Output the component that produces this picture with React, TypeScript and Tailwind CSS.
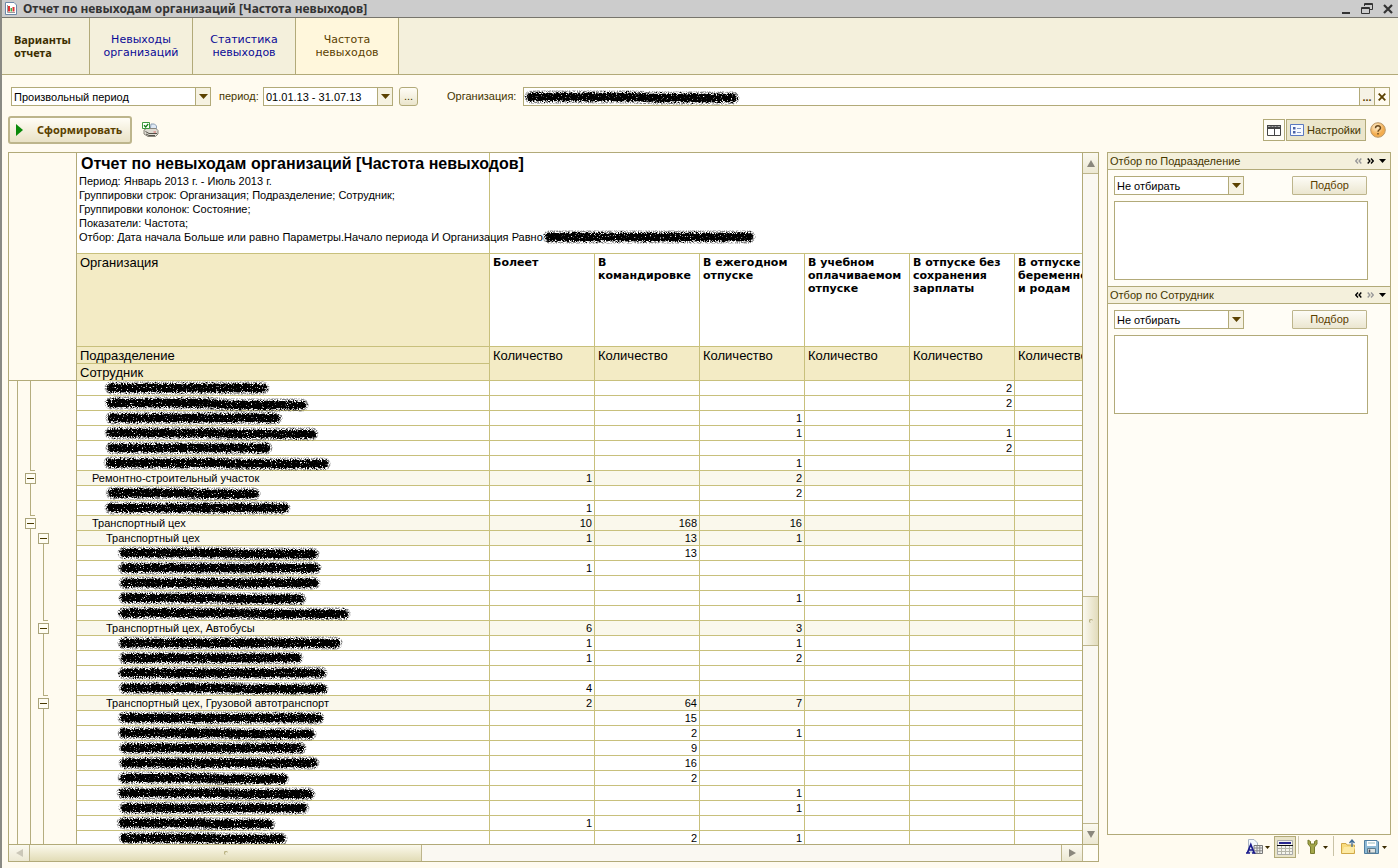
import React from "react";

type Lane = "line" | "end" | "box" | "none";
type Row = { text?: string; ink?: number; indent: number; v: string[]; lanes: [Lane, Lane]; bend?: number };

const ink = (indent: number, width: number, v: string[], lanes: [Lane, Lane], bend = 0): Row => ({ ink: width, indent, v, lanes, bend });
const grp = (text: string, indent: number, v: string[], lanes: [Lane, Lane]): Row => ({ text, indent, v, lanes });

const rows: Row[] = [
  ink(28, 164, ["", "", "", "", "2", ""], ["line", "none"]),
  ink(28, 203, ["", "", "", "", "2", ""], ["line", "none"], 2),
  ink(29, 176, ["", "", "1", "", "", ""], ["line", "none"]),
  ink(28, 213, ["", "", "1", "", "1", ""], ["line", "none"], 1),
  ink(29, 166, ["", "", "", "", "2", ""], ["line", "none"]),
  ink(27, 226, ["", "", "1", "", "", ""], ["end", "none"], 1),
  grp("Ремонтно-строительный участок", 15, ["1", "", "2", "", "", ""], ["box", "none"]),
  ink(29, 154, ["", "", "2", "", "", ""], ["line", "none"], 1),
  ink(28, 185, ["1", "", "", "", "", ""], ["end", "none"]),
  grp("Транспортный цех", 15, ["10", "168", "16", "", "", ""], ["box", "none"]),
  grp("Транспортный цех", 29, ["1", "13", "1", "", "", ""], ["line", "box"]),
  ink(41, 201, ["", "13", "", "", "", ""], ["line", "line"], 1),
  ink(41, 203, ["1", "", "", "", "", ""], ["line", "line"]),
  ink(42, 201, ["", "", "", "", "", ""], ["line", "line"]),
  ink(42, 187, ["", "", "1", "", "", ""], ["line", "line"], 1),
  ink(41, 232, ["", "", "", "", "", ""], ["line", "end"], 1),
  grp("Транспортный цех, Автобусы", 29, ["6", "", "3", "", "", ""], ["line", "box"]),
  ink(41, 224, ["1", "", "1", "", "", ""], ["line", "line"]),
  ink(42, 184, ["1", "", "2", "", "", ""], ["line", "line"]),
  ink(41, 209, ["", "", "", "", "", ""], ["line", "line"]),
  ink(42, 209, ["4", "", "", "", "", ""], ["line", "end"], 1),
  grp("Транспортный цех, Грузовой автотранспорт", 29, ["2", "64", "7", "", "", ""], ["line", "box"]),
  ink(41, 206, ["", "15", "", "", "", ""], ["line", "line"]),
  ink(41, 198, ["", "2", "1", "", "", ""], ["line", "line"], 1),
  ink(42, 187, ["", "9", "", "", "", ""], ["line", "line"]),
  ink(42, 200, ["", "16", "", "", "", ""], ["line", "line"]),
  ink(41, 171, ["", "2", "", "", "", ""], ["line", "line"], 1),
  ink(40, 198, ["", "", "1", "", "", ""], ["line", "line"], 1),
  ink(42, 190, ["", "", "1", "", "", ""], ["line", "line"]),
  ink(40, 158, ["1", "", "", "", "", ""], ["line", "line"], 1),
  ink(42, 168, ["", "2", "1", "", "", ""], ["line", "line"], 1),
];

const columns = [
  "Болеет",
  "В командировке",
  "В ежегодном отпуске",
  "В учебном оплачиваемом отпуске",
  "В отпуске без сохранения зарплаты",
  "В отпуске по беременности и родам",
];

function Scribble({ width, bend = 0, seed = 1 }: { width: number; bend?: number; seed?: number }) {
  const line = `M6 7H${width * 0.5}L${width * 0.62} ${7 + bend}H${width - 6}`;
  const area = { x: -10, y: -6, width: width + 20, height: 28, filterUnits: "userSpaceOnUse" as const };
  return (
    <svg width={width} height="14" viewBox={`0 0 ${width} 14`} className="block shrink-0 overflow-visible" aria-hidden="true">
      <defs>
        <filter id={`core-${seed}`} {...area}>
          <feTurbulence type="fractalNoise" baseFrequency="0.8" numOctaves="2" seed={seed} result="n" />
          <feDisplacementMap in="SourceGraphic" in2="n" scale="6" xChannelSelector="R" yChannelSelector="G" result="d" />
          <feColorMatrix in="n" type="matrix" values="0 0 0 0 0  0 0 0 0 0  0 0 0 0 0  0 0 9 0 -2.2" result="m" />
          <feComposite in="d" in2="m" operator="in" />
        </filter>
        <filter id={`halo-${seed}`} {...area}>
          <feTurbulence type="fractalNoise" baseFrequency="0.9" numOctaves="2" seed={seed + 200} result="n" />
          <feColorMatrix in="n" type="matrix" values="0 0 0 0 0  0 0 0 0 0  0 0 0 0 0  5 0 0 0 -2" result="m" />
          <feComposite in="SourceGraphic" in2="m" operator="in" />
        </filter>
      </defs>
      <g fill="none" stroke="#000" strokeLinecap="round">
        <path d={line} strokeWidth="13" strokeOpacity="0.5" filter={`url(#halo-${seed})`} />
        <path d={line} strokeWidth="8" filter={`url(#core-${seed})`} />
      </g>
    </svg>
  );
}

function LaneMark({ kind }: { kind: Lane }) {
  if (kind === "box")
    return (
      <span className="flex h-[15px] w-[13px] flex-col items-center pt-[2px]">
        <button aria-label="Свернуть группу" className="flex h-[11px] w-[11px] shrink-0 items-center justify-center border border-[#aaa37a] bg-[#fffdf3]">
          <span className="h-px w-[7px] bg-[#4a3a00]" />
        </button>
        <span className="w-px flex-1 bg-[#b5ad7f]" />
      </span>
    );
  return (
    <span className="flex h-[15px] w-[13px] pl-[6px]">
      {kind === "line" && <span className="w-px bg-[#b5ad7f]" />}
      {kind === "end" && <span className="w-[5px] border-b border-l border-[#b5ad7f]" />}
    </span>
  );
}

function Down({ color = "#5b4100" }: { color?: string }) {
  return (
    <svg width="9" height="5" viewBox="0 0 9 5" aria-hidden="true">
      <path d="M0 0H9L4.500 5Z" fill={color} />
    </svg>
  );
}

function Combo({ id, label, value, width }: { id: string; label: string; value: string; width: string }) {
  return (
    <div className={`relative flex h-[19px] border border-[#b2aa79] bg-white ${width}`}>
      <select id={id} aria-label={label} className="h-full w-full appearance-none bg-transparent pt-px pr-4 pl-[2px] text-[11px] leading-[16px] text-black outline-none">
        <option>{value}</option>
      </select>
      <span className="pointer-events-none absolute inset-y-0 right-0 flex w-[15px] items-center justify-center border-l border-[#b2aa79] bg-[#f6f2e2]">
        <Down />
      </span>
    </div>
  );
}

function FilterPanel({ title, id, prev, next }: { title: string; id: string; prev: string; next: string }) {
  return (
    <section className="h-[133px]">
      <header className="flex h-[17px] items-center border-b border-[#b2aa79] bg-[#f4f0dc] pr-[4px] pl-[2px]">
        <h2 className="flex-1 pt-px text-[11px] leading-[15px] text-[#453600]">{title}</h2>
        <div className="flex items-center gap-[5px]">
          <button aria-label="Предыдущий" className={prev}>
            <svg width="7" height="6" viewBox="0 0 7 6" fill="none" stroke="currentColor" strokeWidth="1.400"><path d="M3 .5 .8 3 3 5.500M6.300 .5 4.100 3l2.200 2.500" /></svg>
          </button>
          <button aria-label="Следующий" className={next}>
            <svg width="7" height="6" viewBox="0 0 7 6" fill="none" stroke="currentColor" strokeWidth="1.400"><path d="M.7 .5 2.900 3 .7 5.500M4 .5 6.200 3 4 5.500" /></svg>
          </button>
          <button aria-label="Меню">
            <svg width="7" height="4" viewBox="0 0 7 4"><path d="M0 0H7L3.500 4Z" fill="#000" /></svg>
          </button>
        </div>
      </header>
      <div className="px-[6px] pt-[6px]">
        <div className="flex justify-between pr-[17px]">
          <Combo id={id} label={title} value="Не отбирать" width="w-[130px]" />
          <button className="h-[19px] w-[75px] rounded-[1px] border border-[#bdb58c] bg-linear-to-b from-[#fdfcf6] to-[#ebe6d0] text-[11px] leading-[17px] text-[#5b4100]">Подбор</button>
        </div>
        <div className="mt-[6px] mr-4 h-[79px] border border-[#b2aa79] bg-white" />
      </div>
    </section>
  );
}

const scrollBtn = "flex shrink-0 items-center justify-center border-[#bdb58c] bg-linear-to-b from-[#fbf9f0] to-[#ece8d3]";

export default function App() {
  return (
    <div className="flex h-screen min-h-[500px] flex-col overflow-hidden border-l-2 border-[#8a8a84] bg-[#fffbf0] font-['Liberation_Sans',Arial,sans-serif] text-[11px] text-black">
      <header className="flex h-[18px] shrink-0 items-center border-b border-[#77756c] bg-[#cccccc] pr-[5px] pl-[3px]">
        <svg width="12" height="13" viewBox="0 0 12 13" aria-hidden="true">
          <path d="M.5 .5H9L11.500 3V12.500H.5Z" fill="#fff" stroke="#6d87a8" />
          <path d="M2.500 3V10.500H10" fill="none" stroke="#999" />
          <path d="M3 4H5V9.500H3Z" fill="#d33" />
          <path d="M5.500 6H7V9.500H5.500Z" fill="#4a4" />
          <path d="M7.500 5H9.500V9.500H7.500Z" fill="#d33" />
        </svg>
        <h1 className="ml-[6px] flex-1 font-['Noto_Sans',Tahoma,sans-serif] text-[12px] leading-[16px] font-bold whitespace-nowrap text-[#333]">Отчет по невыходам организаций [Частота невыходов]</h1>
        <div className="flex items-center gap-[10px] text-[#333]">
          <button aria-label="Свернуть"><svg width="9" height="11" viewBox="0 0 9 11"><path d="M0 9H8V11H0Z" fill="currentColor" /></svg></button>
          <button aria-label="Восстановить"><svg width="12" height="11" viewBox="0 0 12 11" fill="none" stroke="currentColor"><path d="M3.500 3V.5H11.500V6.500H8.500M3 1.500H11M.5 4.500H8.500V10.500H.5ZM1 5.500H8" /></svg></button>
          <button aria-label="Закрыть"><svg width="10" height="10" viewBox="0 0 10 10" fill="none" stroke="currentColor" strokeWidth="2.200"><path d="M1 1 9 9M9 1 1 9" /></svg></button>
        </div>
      </header>

      <nav className="flex h-[57px] shrink-0 border-b border-[#b2aa79] bg-[#f4f0dc] font-['DejaVu_Sans',Verdana,sans-serif] text-[11px] leading-[13px]">
        <div className="flex w-[88px] items-center border-r border-[#b2aa79] pl-3 font-['Noto_Sans',Tahoma,sans-serif] font-bold text-[#3d2e00]">Варианты<br />отчета</div>
        <a href="#absences" className="flex w-[103px] items-center justify-center border-r border-[#b2aa79] text-center text-[#0a0a96]">Невыходы<br />организаций</a>
        <a href="#statistics" className="flex w-[103px] items-center justify-center border-r border-[#b2aa79] text-center text-[#0a0a96]">Статистика<br />невыходов</a>
        <a href="#frequency" aria-current="page" className="flex w-[103px] items-center justify-center border-r border-[#b2aa79] bg-[#fff7dc] text-center text-[#5b4100]">Частота<br />невыходов</a>
      </nav>

      <div className="flex shrink-0 items-center pt-3 pr-2 pl-[9px] text-[#453600]">
        <Combo id="period-kind" label="Вид периода" value="Произвольный период" width="w-[200px]" />
        <label htmlFor="period" className="ml-2 w-[44px]">период:</label>
        <Combo id="period" label="Период" value="01.01.13 - 31.07.13" width="w-[130px]" />
        <button aria-label="Выбрать период" className="ml-[6px] h-[19px] w-[19px] rounded-[3px] border border-[#b2aa79] bg-linear-to-b from-[#fffdf6] to-[#ebe5cc] leading-[15px]">...</button>
        <label htmlFor="org" className="ml-[29px] w-[76px]">Организация:</label>
        <div className="relative flex h-[19px] flex-1 border border-[#b2aa79] bg-white">
          <input id="org" className="min-w-0 flex-1 bg-transparent outline-none" />
          <span className="pointer-events-none absolute top-[2px] left-px"><Scribble width={214} bend={1} seed={90} /></span>
          <button aria-label="Выбрать организацию" className="w-[15px] border-l border-[#b2aa79] bg-[#f6f2e6] leading-[16px] font-bold text-[#5b4100]">...</button>
          <button aria-label="Очистить" className="flex w-[15px] items-center justify-center border-l border-[#b2aa79] bg-[#fffbf0]">
            <svg width="8" height="8" viewBox="0 0 8 8" fill="none" stroke="#5b4100" strokeWidth="1.800"><path d="M.7 .7 7.300 7.300M7.300 .7 .7 7.300" /></svg>
          </button>
        </div>
      </div>

      <div className="flex shrink-0 items-center pt-[10px] pr-3 pb-2 pl-[6px]">
        <button className="flex h-[28px] w-[124px] items-center rounded-[3px] border-2 border-[#bdb58c] bg-linear-to-b from-[#fffdf6] to-[#e9e2c6] pl-[6px] font-['Noto_Sans',Tahoma,sans-serif] text-[11px] font-bold text-[#5b4100]">
          <svg width="7" height="12" viewBox="0 0 7 12" className="mr-[14px]"><path d="M0 0 7 6 0 12Z" fill="#0a8a0a" /></svg>
          Сформировать
        </button>
        <button aria-label="Печать" className="ml-[10px]">
          <svg width="17" height="16" viewBox="0 0 17 16">
            <path d="M9 2H12.500L14.500 4V9H8Z" fill="#dfe9f5" stroke="#8d9fb5" />
            <path d="M2 8 4.500 6.500H14L16 8.500V12L13.500 14.500H6L2 12Z" fill="#dedbd2" stroke="#8a867c" />
            <path d="M3.500 9.500 7 11.500H15M4 12 7 13.500H13" fill="none" stroke="#55524a" />
            <path d="M11.500 10H14" stroke="#d66" />
            <path d="M.5 .5H7.500V6.500H.5Z" fill="#fff" stroke="#3f9a3f" />
            <path d="M2 3.200 3.700 5 6.200 2" fill="none" stroke="#168016" strokeWidth="1.300" />
          </svg>
        </button>
        <div className="flex-1" />
        <button aria-label="Таблица" className="flex h-[22px] w-[22px] items-center justify-center border border-[#b2aa79] bg-[#fffdf6]">
          <svg width="14" height="11" viewBox="0 0 14 11" fill="none" stroke="#444"><path d="M.5 .5H13.500V10.500H.5ZM7.500 4V10" fill="#fff" /><path d="M0 2H14" strokeWidth="4" stroke="#444" /><path d="M1 1.500H3.500M4.500 1.500H6.500M7.500 1.500H9.500M10.500 1.500H13" stroke="#aaa" /></svg>
        </button>
        <button className="ml-px flex h-[22px] w-[80px] items-center gap-[3px] border border-[#b2aa79] bg-[#ebe6cc] pl-[3px] text-[11px] whitespace-nowrap text-[#453600]">
          <svg width="14" height="12" viewBox="0 0 14 12" className="shrink-0"><path d="M.5 .5H13.500V11.500H.5Z" fill="#f6f9ff" stroke="#5a78c0" /><path d="M3 3H5.500V5.500H3ZM3 7H5.500V9.500H3Z" fill="#4a62a8" /><path d="M7 4.500H11M7 8.500H11" stroke="#8296c8" /></svg>
          Настройки
        </button>
        <button aria-label="Справка" className="ml-1">
          <svg width="16" height="16" viewBox="0 0 16 16"><defs><radialGradient id="help" cx=".4" cy=".3"><stop offset="0" stopColor="#fff3d6" /><stop offset="1" stopColor="#f3ac4e" /></radialGradient></defs><circle cx="8" cy="8" r="7.300" fill="url(#help)" stroke="#b9986a" /><path d="M5.500 6.200C5.500 3 10.500 3 10.500 6 10.500 7.800 8 7.700 8 9.700M8 11V12.500" fill="none" stroke="#6b4a1e" strokeWidth="1.500" /></svg>
        </button>
      </div>

      <main className="flex min-h-0 flex-1 gap-2 pr-[7px] pl-[6px]">
        <div className="mb-[6px] flex min-w-0 flex-1 flex-col border border-[#b2aa79]">
          <div className="flex min-h-0 flex-1">
            <div className="min-w-0 flex-1 overflow-hidden bg-white">
              <table className="w-[1111px] table-fixed border-separate border-spacing-0">
                <colgroup>
                  <col className="w-[68px]" />
                  <col className="w-[413px]" />
                  {columns.map((c) => <col key={c} className="w-[105px]" />)}
                </colgroup>
                <thead>
                  <tr className="h-[101px]">
                    <td className="border-r border-[#b2aa79] bg-[#fffbf0]" />
                    <td className="overflow-visible border-r border-b border-[#c8c07c] p-0 pl-[2px] align-top leading-[14px] whitespace-nowrap">
                      <div className="w-0">
                        <h2 className="pl-[2px] text-[16px] leading-[21px] font-bold">Отчет по невыходам организаций [Частота невыходов]</h2>
                        <p>Период: Январь 2013 г. - Июль 2013 г.</p>
                        <p>Группировки строк: Организация; Подразделение; Сотрудник;</p>
                        <p>Группировки колонок: Состояние;</p>
                        <p>Показатели: Частота;</p>
                        <div className="flex h-[14px]">
                          <span>Отбор: Дата начала Больше или равно Параметры.Начало периода И Организация Равно</span>
                          <Scribble width={212} seed={91} />
                        </div>
                      </div>
                    </td>
                    <td colSpan={6} className="border-b border-[#c8c07c]" />
                  </tr>
                  <tr className="h-[93px]">
                    <td className="border-r border-[#b2aa79] bg-[#fffbf0]" />
                    <th className="border-r border-b border-[#c8c07c] bg-[#f3ebc5] p-0 pt-px pl-[3px] text-left align-top text-[13px] leading-[15px] font-normal">Организация</th>
                    {columns.map((c) => (
                      <th key={c} className="overflow-visible border-r border-b border-[#c8c07c] p-0 pt-[2px] pl-[3px] text-left align-top font-['DejaVu_Sans',Verdana,sans-serif] text-[11px] leading-[13px] font-bold">{c}</th>
                    ))}
                  </tr>
                  <tr className="h-[17px]">
                    <td className="border-r border-[#b2aa79] bg-[#fffbf0]" />
                    <th className="border-r border-b border-[#c8c07c] bg-[#f3ebc5] p-0 pl-[3px] text-left text-[13px] leading-[15px] font-normal">Подразделение</th>
                    {columns.map((c) => (
                      <th key={c} rowSpan={2} className="border-r border-b border-[#c8c07c] bg-[#f3ebc5] p-0 pt-px pl-[3px] text-left align-top text-[13px] leading-[16px] font-normal">Количество</th>
                    ))}
                  </tr>
                  <tr className="h-[17px]">
                    <td className="border-r border-b border-[#b2aa79] bg-[#fffbf0]" />
                    <th className="border-r border-b border-[#c8c07c] bg-[#f3ebc5] p-0 pl-[3px] text-left text-[13px] leading-[15px] font-normal">Сотрудник</th>
                  </tr>
                </thead>
                <tbody>
                  {rows.map((r, i) => (
                    <tr key={i} className={r.text ? "h-[15px] bg-[#faf8ec]" : "h-[15px]"}>
                      <td className="border-r border-[#b2aa79] bg-[#fffbf0] p-0 pl-[2px]">
                        <div className="flex h-[15px]">
                          <LaneMark kind="line" />
                          <LaneMark kind={r.lanes[0]} />
                          <LaneMark kind={r.lanes[1]} />
                        </div>
                      </td>
                      <td className="border-r border-b border-[#c8c07c] p-0">
                        <div className="flex h-[14px] leading-[14px] whitespace-nowrap" style={{ paddingLeft: r.indent }}>
                          {r.text ?? <Scribble width={r.ink ?? 0} bend={r.bend} seed={i + 1} />}
                        </div>
                      </td>
                      {r.v.map((v, j) => (
                        <td key={j} className="border-r border-b border-[#c8c07c] p-0 pr-[2px] text-right text-[11px] leading-[14px]">{v}</td>
                      ))}
                    </tr>
                  ))}
                </tbody>
              </table>
            </div>
            <div className="flex w-[16px] shrink-0 flex-col border-l border-[#b2aa79] bg-[#faf8f2]">
              <button aria-label="Вверх" className={`${scrollBtn} h-[21px] border-b`}><svg width="8" height="7" viewBox="0 0 8 7"><path d="M4 0 8 7H0Z" fill="#8a877c" /></svg></button>
              <div className="flex-[423]" />
              <div className="flex h-[50px] items-center justify-center border-y border-[#bdb58c] bg-linear-to-r from-[#fbf9f0] to-[#e2dcbc]"><span className="h-1 w-1 rounded-full border-t border-l border-[#b2aa79]" /></div>
              <div className="flex-[177]" />
              <button aria-label="Вниз" className={`${scrollBtn} h-[21px] border-t`}><svg width="8" height="7" viewBox="0 0 8 7"><path d="M4 7 8 0H0Z" fill="#8a877c" /></svg></button>
            </div>
          </div>
          <div className="flex h-[17px] shrink-0 border-t border-[#b2aa79] bg-[#faf8f2]">
            <button aria-label="Влево" className={`${scrollBtn} w-[21px] border-r`}><svg width="7" height="8" viewBox="0 0 7 8"><path d="M0 4 7 0V8Z" fill="#cbc7b8" /></svg></button>
            <div className="flex flex-[392] items-center justify-center border-r border-[#bdb58c] bg-linear-to-b from-[#fbf9ec] to-[#e2dcb6]"><span className="h-1 w-1 rounded-full border-t border-l border-[#b2aa79]" /></div>
            <div className="flex-[640]" />
            <button aria-label="Вправо" className={`${scrollBtn} w-[22px] border-x`}><svg width="7" height="8" viewBox="0 0 7 8"><path d="M7 4 0 0V8Z" fill="#8a877c" /></svg></button>
            <div className="w-[15px] bg-[#fffdf6]" />
          </div>
        </div>

        <aside className="flex w-[284px] shrink-0 flex-col">
          <div className="min-h-0 flex-1 border border-[#b2aa79] bg-[#fffdf6]">
            <FilterPanel id="dept" title="Отбор по Подразделение" prev="text-[#999]" next="text-black" />
            <div className="border-t border-[#b2aa79]">
              <FilterPanel id="staff" title="Отбор по Сотрудник" prev="text-black" next="text-[#999]" />
            </div>
          </div>
          <div className="flex h-[33px] shrink-0 items-start justify-end pt-px pr-1">
            <button aria-label="Шрифт" className="mt-[3px] flex items-center gap-[2px]">
              <svg width="17" height="16" viewBox="0 0 17 16">
                <path d="M2.500 .5H8L11.500 4V13H2.500Z" fill="#f4f8fd" stroke="#a9b4c4" />
                <path d="M8 6.500H16.500V14.500H8Z" fill="#eee" stroke="#777" /><path d="M8 9H16M8 11.800H16M11 6.500V14.500M13.800 6.500V14.500" stroke="#888" />
                <path d="M0 14H4M6 14H9.500M1.500 13.500 4.800 5.500 8 13.500M3 11H6.500" fill="none" stroke="#1a1a8c" strokeWidth="1.700" />
              </svg>
              <svg width="5" height="3" viewBox="0 0 5 3"><path d="M0 0H5L2.500 3Z" fill="#3a2a00" /></svg>
            </button>
            <button aria-label="Шапка таблицы" className="ml-1 flex h-[22px] w-[22px] items-center justify-center border border-[#b2aa79] bg-[#e8e3c8]">
              <svg width="16" height="15" viewBox="0 0 16 15"><path d="M.5 .5H15.500V14.500H.5Z" fill="#f4f4ee" stroke="#aaa" /><path d="M2 3H14" stroke="#26268f" strokeWidth="2" /><path d="M0 5.500H16" stroke="#111" /><path d="M1 8.500H15M1 11.500H15M4.500 6V14M8.500 6V14M12.500 6V14" stroke="#b5b5a8" /></svg>
            </button>
            <span className="ml-[2px] h-[18px] w-px bg-[#d0cab0]" />
            <button aria-label="Сервис" className="mt-[3px] ml-2 flex items-center gap-[5px]">
              <svg width="11" height="16" viewBox="0 0 11 16"><path d="M1 1V5L3.500 8V14.500H7.500V8L10 5V1L7.500 2.500V5H3.500V2.500Z" fill="#a3a64a" stroke="#777a2e" /></svg>
              <svg width="5" height="3" viewBox="0 0 5 3"><path d="M0 0H5L2.500 3Z" fill="#3a2a00" /></svg>
            </button>
            <span className="ml-[5px] h-[20px] w-px bg-[#c9c3a6]" />
            <button aria-label="Открыть" className="mt-[3px] ml-[7px]">
              <svg width="15" height="16" viewBox="0 0 15 16"><path d="M.5 14.500V4.500H5L6 6H13.500V14.500Z" fill="#f9dc7e" stroke="#d0a848" /><path d="M1 14 3 8H14L12.500 14Z" fill="#fdeaa4" /><path d="M11 8V1.500M8.500 4 11 1 13.500 4" fill="none" stroke="#3f6a94" strokeWidth="1.300" /></svg>
            </button>
            <button aria-label="Сохранить" className="mt-[4px] ml-2 flex items-center gap-[3px]">
              <svg width="15" height="14" viewBox="0 0 15 14"><path d="M.5 .5H13L14.500 2V13.500H.5Z" fill="#8fbad6" stroke="#4f7d9f" /><path d="M3 1H12V6H3Z" fill="#fff" /><path d="M4 3H11" stroke="#9bb" /><path d="M3.500 8.500H11.500V13H3.500Z" fill="#dfe3e2" stroke="#5a7d90" /><path d="M5.500 9.500V12.500" stroke="#445" strokeWidth="1.500" /></svg>
              <svg width="5" height="3" viewBox="0 0 5 3"><path d="M0 0H5L2.500 3Z" fill="#3a2a00" /></svg>
            </button>
          </div>
        </aside>
      </main>
    </div>
  );
}
